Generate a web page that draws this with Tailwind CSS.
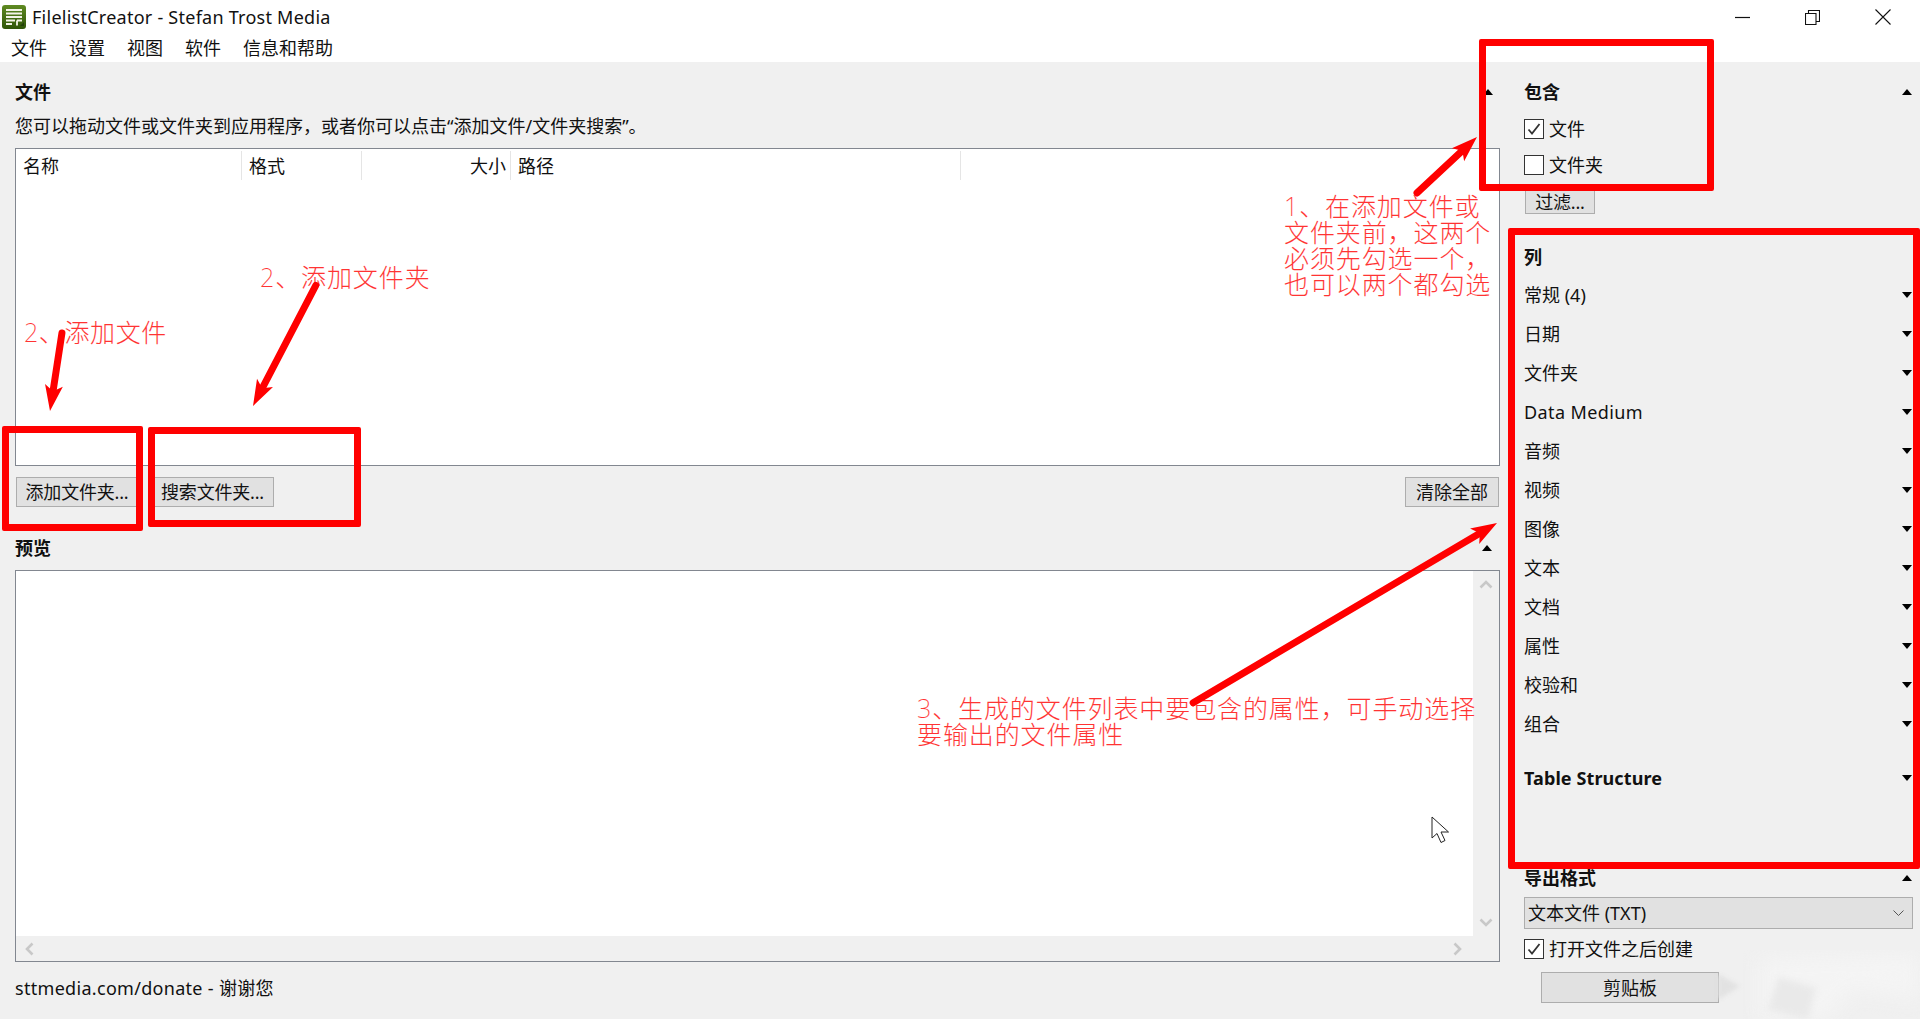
<!DOCTYPE html>
<html lang="zh">
<head>
<meta charset="utf-8">
<script src="https://cdn.jsdelivr.net/npm/@tailwindcss/browser@4"></script>
</head>
<body class="m-0 bg-white">
<div class="relative w-[1920px] h-[1019px] overflow-hidden flex flex-col bg-white text-[18px] leading-[24px] text-[#111] font-['Noto_Sans','Noto_Sans_CJK_SC',sans-serif]">

  <!-- title bar -->
  <div class="h-[34px] flex items-center pl-[2px] shrink-0">
    <svg class="w-[24px] h-[24px] shrink-0" viewBox="0 0 24 24">
      <defs><linearGradient id="lg" x1="0" y1="0" x2="0" y2="1"><stop offset="0" stop-color="#5f8a22"/><stop offset="1" stop-color="#2f5508"/></linearGradient></defs>
      <rect x="0" y="0" width="24" height="24" rx="3" fill="url(#lg)"/>
      <path d="M4 5h16M4 8.500h16M4 12h16M4 15.500h9M4 19h6M15 15.500h5M15 15.500v5" stroke="#f4f4e8" stroke-width="1.800" fill="none"/>
      <path d="M18 21l4-4v4z" fill="#23400a"/>
    </svg>
    <span class="ml-[6px] tracking-[0.25px]">FilelistCreator - Stefan Trost Media</span>
    <div class="ml-auto flex items-center pr-[29px] gap-[55px]">
      <svg class="w-[15px] h-[15px]" viewBox="0 0 15 15"><path d="M0 7.500h15" stroke="#111" stroke-width="1.200"/></svg>
      <svg class="w-[15px] h-[15px]" viewBox="0 0 15 15"><path d="M0.500 3.500h10.500v11h-10.500zM3.500 3.500v-3h11v11h-3.500" stroke="#111" stroke-width="1.100" fill="none"/></svg>
      <svg class="w-[16px] h-[16px]" viewBox="0 0 16 16"><path d="M0.500 0.500l15 15M15.500 0.500l-15 15" stroke="#111" stroke-width="1.100"/></svg>
    </div>
  </div>

  <!-- menu -->
  <div class="h-[28px] flex items-center pl-[11px] gap-[22px] shrink-0">
    <span>文件</span><span>设置</span><span>视图</span><span>软件</span><span>信息和帮助</span>
  </div>

  <!-- main -->
  <div class="flex-1 flex bg-[#f0f0f0]">
    <!-- left -->
    <div class="w-[1500px] pl-[15px] flex flex-col shrink-0">
      <div class="mt-[18px] h-[24px] flex items-center justify-between">
        <span class="font-bold">文件</span>
        <span class="w-0 h-0 mr-[7px] border-x-[5px] border-x-transparent border-b-[6px] border-b-black"></span>
      </div>
      <div class="mt-[10px] h-[24px]">您可以拖动文件或文件夹到应用程序，或者你可以点击“添加文件/文件夹搜索”。</div>
      <div class="mt-[10px] h-[318px] bg-white border border-[#828790]">
        <div class="flex h-[31px] pt-[2px] items-stretch">
          <div class="w-[226px] pl-[7px] border-r border-[#e5e5e5] flex items-center">名称</div>
          <div class="w-[120px] pl-[7px] border-r border-[#e5e5e5] flex items-center">格式</div>
          <div class="w-[149px] pr-[4px] border-r border-[#e5e5e5] flex items-center justify-end">大小</div>
          <div class="w-[450px] pl-[7px] border-r border-[#e5e5e5] flex items-center">路径</div>
        </div>
      </div>
      <div class="mt-[11px] h-[30px] flex justify-between">
        <div class="flex gap-[13px]">
          <div class="w-[122px] h-[30px] ml-[1px] bg-[#e1e1e1] border border-[#adadad] flex items-center justify-center tracking-[-0.2px]">添加文件夹...</div>
          <div class="w-[123px] h-[30px] bg-[#e1e1e1] border border-[#adadad] flex items-center justify-center tracking-[-0.2px]">搜索文件夹...</div>
        </div>
        <div class="w-[94px] h-[30px] bg-[#e1e1e1] border border-[#adadad] flex items-center justify-center mr-[1px]">清除全部</div>
      </div>
      <div class="mt-[29px] h-[24px] flex items-center justify-between">
        <span class="font-bold">预览</span>
        <span class="w-0 h-0 mr-[8px] border-x-[5px] border-x-transparent border-b-[6px] border-b-black"></span>
      </div>
      <div class="mt-[10px] h-[392px] border border-[#828790] flex flex-col">
        <div class="flex-1 flex">
          <div class="flex-1 bg-white"></div>
          <div class="w-[26px] bg-[#f0f0f0] flex flex-col items-center justify-between py-[9px]">
            <svg class="w-[14px] h-[9px]" viewBox="0 0 14 9"><path d="M1.500 7.500l5.500-5.500 5.500 5.500" stroke="#c8c8c8" stroke-width="2.600" fill="none"/></svg>
            <svg class="w-[14px] h-[9px]" viewBox="0 0 14 9"><path d="M1.500 1.500l5.500 5.500 5.500-5.500" stroke="#c8c8c8" stroke-width="2.600" fill="none"/></svg>
          </div>
        </div>
        <div class="h-[25px] bg-[#f0f0f0] flex items-center justify-between pl-[9px] pr-[37px]">
          <svg class="w-[9px] h-[14px]" viewBox="0 0 9 14"><path d="M7.500 1.500l-5.500 5.500 5.500 5.500" stroke="#c8c8c8" stroke-width="2.600" fill="none"/></svg>
          <svg class="w-[9px] h-[14px]" viewBox="0 0 9 14"><path d="M1.500 1.500l5.500 5.500-5.500 5.500" stroke="#c8c8c8" stroke-width="2.600" fill="none"/></svg>
        </div>
      </div>
      <div class="mt-[14px] h-[24px] tracking-[0.3px]">sttmedia.com/donate - 谢谢您</div>
    </div>

    <!-- right -->
    <div class="flex-1 pl-[24px] pr-[8px] flex flex-col">
      <div class="mt-[18px] h-[24px] flex items-center justify-between">
        <span class="font-bold">包含</span>
        <span class="w-0 h-0 border-x-[5px] border-x-transparent border-b-[6px] border-b-black"></span>
      </div>
      <div class="mt-[7px] h-[36px] flex items-center gap-[5px]">
        <span class="w-[20px] h-[20px] bg-white border border-[#333] flex items-center justify-center">
          <svg class="w-[14px] h-[14px]" viewBox="0 0 14 14"><path d="M1.500 7.500l3.500 4 7.500-9.500" stroke="#333" stroke-width="1.800" fill="none"/></svg>
        </span>
        <span>文件</span>
      </div>
      <div class="h-[36px] flex items-center gap-[5px]">
        <span class="w-[20px] h-[20px] bg-white border border-[#333]"></span>
        <span>文件夹</span>
      </div>
      <div class="mt-[7px] w-[70px] h-[24px] ml-[1px] bg-[#e1e1e1] border border-[#adadad] flex items-center justify-center tracking-[-0.2px]">过滤...</div>

      <div class="mt-[30px] h-[26px] flex items-center font-bold">列</div>
      <div class="mt-[5px]">
        <div class="h-[39px] flex items-center justify-between"><span>常规 (4)</span><span class="w-0 h-0 border-x-[5px] border-x-transparent border-t-[6px] border-t-black"></span></div>
        <div class="h-[39px] flex items-center justify-between"><span>日期</span><span class="w-0 h-0 border-x-[5px] border-x-transparent border-t-[6px] border-t-black"></span></div>
        <div class="h-[39px] flex items-center justify-between"><span>文件夹</span><span class="w-0 h-0 border-x-[5px] border-x-transparent border-t-[6px] border-t-black"></span></div>
        <div class="h-[39px] flex items-center justify-between"><span class="tracking-[0.4px]">Data Medium</span><span class="w-0 h-0 border-x-[5px] border-x-transparent border-t-[6px] border-t-black"></span></div>
        <div class="h-[39px] flex items-center justify-between"><span>音频</span><span class="w-0 h-0 border-x-[5px] border-x-transparent border-t-[6px] border-t-black"></span></div>
        <div class="h-[39px] flex items-center justify-between"><span>视频</span><span class="w-0 h-0 border-x-[5px] border-x-transparent border-t-[6px] border-t-black"></span></div>
        <div class="h-[39px] flex items-center justify-between"><span>图像</span><span class="w-0 h-0 border-x-[5px] border-x-transparent border-t-[6px] border-t-black"></span></div>
        <div class="h-[39px] flex items-center justify-between"><span>文本</span><span class="w-0 h-0 border-x-[5px] border-x-transparent border-t-[6px] border-t-black"></span></div>
        <div class="h-[39px] flex items-center justify-between"><span>文档</span><span class="w-0 h-0 border-x-[5px] border-x-transparent border-t-[6px] border-t-black"></span></div>
        <div class="h-[39px] flex items-center justify-between"><span>属性</span><span class="w-0 h-0 border-x-[5px] border-x-transparent border-t-[6px] border-t-black"></span></div>
        <div class="h-[39px] flex items-center justify-between"><span>校验和</span><span class="w-0 h-0 border-x-[5px] border-x-transparent border-t-[6px] border-t-black"></span></div>
        <div class="h-[39px] flex items-center justify-between"><span>组合</span><span class="w-0 h-0 border-x-[5px] border-x-transparent border-t-[6px] border-t-black"></span></div>
      </div>
      <div class="mt-[23px] h-[24px] flex items-center justify-between font-bold"><span class="tracking-[0.1px]">Table Structure</span><span class="w-0 h-0 border-x-[5px] border-x-transparent border-t-[6px] border-t-black"></span></div>
      <div class="mt-[76px] h-[24px] flex items-center justify-between"><span class="font-bold">导出格式</span><span class="w-0 h-0 border-x-[5px] border-x-transparent border-b-[6px] border-b-black"></span></div>
      <div class="mt-[7px] h-[32px] mr-[-1px] bg-[#e1e1e1] border border-[#adadad] flex items-center justify-between pl-[3px] pr-[8px]">
        <span>文本文件 (TXT)</span>
        <svg class="w-[11px] h-[7px]" viewBox="0 0 11 7"><path d="M0.500 0.500l5 5 5-5" stroke="#555" stroke-width="1" fill="none"/></svg>
      </div>
      <div class="mt-[10px] h-[20px] flex items-center gap-[5px]">
        <span class="w-[20px] h-[20px] bg-white border border-[#333] flex items-center justify-center">
          <svg class="w-[14px] h-[14px]" viewBox="0 0 14 14"><path d="M1.500 7.500l3.500 4 7.500-9.500" stroke="#333" stroke-width="1.800" fill="none"/></svg>
        </span>
        <span>打开文件之后创建</span>
      </div>
      <div class="mt-[13px] ml-[17px] w-[178px] h-[31px] bg-[#e1e1e1] border border-[#adadad] flex items-center justify-center">剪贴板</div>
    </div>
  </div>

  <!-- watermark remnants at the bottom right -->
  <svg class="absolute left-[1700px] top-[950px] w-[220px] h-[69px] overflow-hidden" viewBox="0 0 220 69">
    <polygon points="60,8 220,4 220,50 150,40 130,69 60,69" fill="#f4f4f4" class="blur-[10px]"/>
    <polygon points="18,24 40,36 18,50" fill="#e2e2e2" class="blur-[2px]"/>
    <polygon points="78,27 116,38 108,69 68,60" fill="#e9e9e9" class="blur-[3px]"/>
  </svg>

  <!-- mouse pointer in the screenshot -->
  <svg class="absolute left-[1431px] top-[816px] w-[19px] h-[28px]" viewBox="0 0 19 28">
    <path d="M1 1v21l5-4.500 4 9 4-2-4-8.500h7.500z" fill="#fff" stroke="#222" stroke-width="1"/>
  </svg>

  <!-- red annotation text -->
  <div class="absolute left-[1284px] top-[193px] text-[25px] leading-[26px] tracking-[0.9px] text-[#ff0000]/80 font-extralight whitespace-nowrap">1、在添加文件或<br>文件夹前，这两个<br>必须先勾选一个，<br>也可以两个都勾选</div>
  <div class="absolute left-[24px] top-[319px] text-[25px] leading-[26px] tracking-[0.6px] text-[#ff0000]/80 font-extralight whitespace-nowrap">2、添加文件</div>
  <div class="absolute left-[260px] top-[264px] text-[25px] leading-[26px] tracking-[0.9px] text-[#ff0000]/80 font-extralight whitespace-nowrap">2、添加文件夹</div>
  <div class="absolute left-[917px] top-[695px] text-[25px] leading-[26px] tracking-[0.9px] text-[#ff0000]/80 font-extralight whitespace-nowrap">3、生成的文件列表中要包含的属性，可手动选择<br>要输出的文件属性</div>

  <!-- red boxes -->
  <div class="absolute left-[1479px] top-[39px] w-[235px] h-[152px] border-[7px] border-[#ff0000] rounded-[2px]"></div>
  <div class="absolute left-[1508px] top-[228px] w-[412px] h-[641px] border-[7px] border-[#ff0000] rounded-[2px]"></div>
  <div class="absolute left-[2px] top-[426px] w-[141px] h-[105px] border-[7px] border-[#ff0000] rounded-[2px]"></div>
  <div class="absolute left-[148px] top-[427px] w-[213px] h-[100px] border-[7px] border-[#ff0000] rounded-[2px]"></div>

  <!-- red arrows -->
  <svg class="absolute inset-0 w-[1920px] h-[1019px] pointer-events-none" viewBox="0 0 1920 1019">
    <g fill="#ff0000" stroke="#ff0000" stroke-linecap="round">
      <g transform="translate(1477 137) rotate(-43)"><line x1="-82" y1="0" x2="-16" y2="0" stroke-width="7"/><polygon points="0,0 -26,-9 -20,0 -26,9" stroke="none"/></g>
      <g transform="translate(50 411) rotate(98.700)"><line x1="-79" y1="0" x2="-16" y2="0" stroke-width="7"/><polygon points="0,0 -26,-9 -20,0 -26,9" stroke="none"/></g>
      <g transform="translate(253 406) rotate(117.500)"><line x1="-136" y1="0" x2="-16" y2="0" stroke-width="7"/><polygon points="0,0 -26,-9 -20,0 -26,9" stroke="none"/></g>
      <g transform="translate(1497 523) rotate(-30.600)"><line x1="-353" y1="0" x2="-16" y2="0" stroke-width="7"/><polygon points="0,0 -26,-9 -20,0 -26,9" stroke="none"/></g>
    </g>
  </svg>
</div>
</body>
</html>
